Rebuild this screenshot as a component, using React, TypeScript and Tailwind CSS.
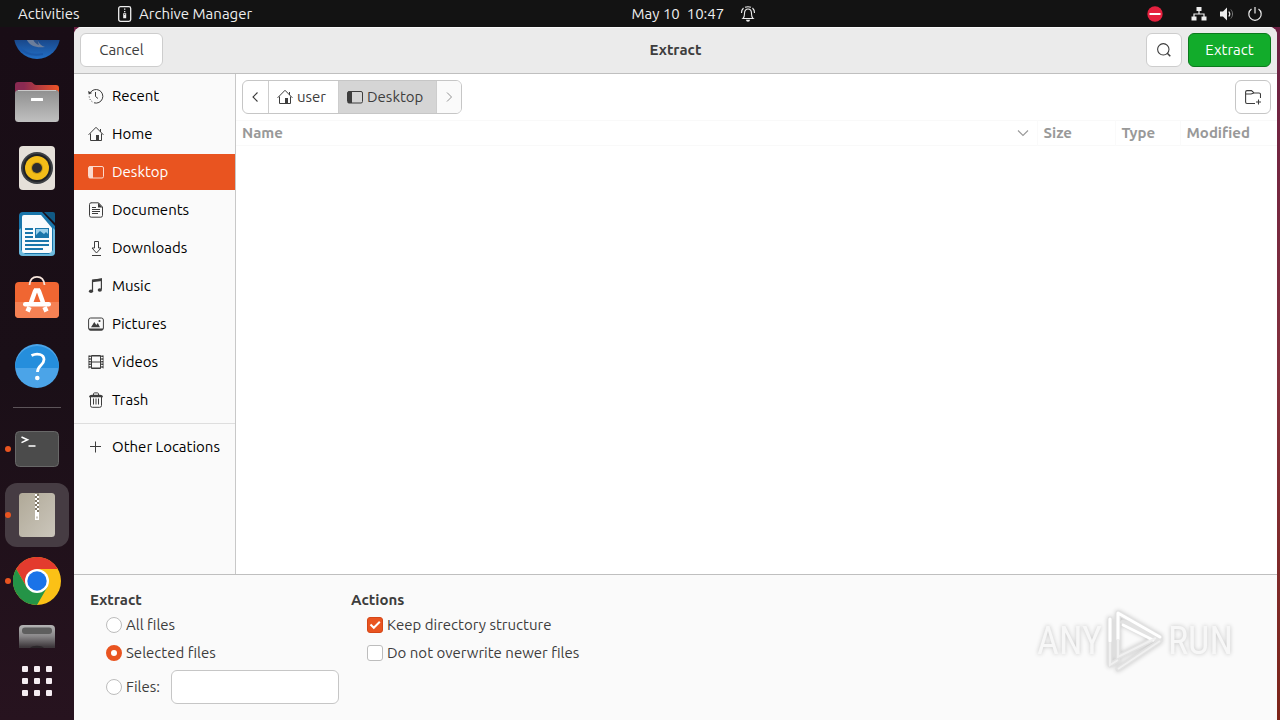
import { useState } from 'react';
import type { ReactNode } from 'react';

const line = { fill: 'none', stroke: 'currentColor', strokeWidth: 1 } as const;

function Icon({ children }: { children: ReactNode }) {
  return (
    <svg viewBox="0 0 16 16" className="h-4 w-4 shrink-0" aria-hidden="true">
      {children}
    </svg>
  );
}

const RecentIcon = () => (
  <Icon>
    <path {...line} d="M2.2 4.8A6.8 6.8 0 1 1 6 14.800M7.500 4v4.500l2.500 2" />
    <path fill="currentColor" d="M0 3l.8 3.600L4.200 5z" />
    <path {...line} strokeDasharray="1 1.600" d="M1.200 8.500a7 7 0 0 0 4.500 6" />
  </Icon>
);

const HomeIcon = () => (
  <Icon>
    <path {...line} d="M.6 8.800 8 1.300l7.400 7.500M12.500 3v3M2.500 7.500v7h11v-7" />
    <path fill="currentColor" d="M8 9h3v6H8z" />
  </Icon>
);

const DesktopIcon = () => (
  <Icon>
    <rect {...line} x=".5" y="2.500" width="15" height="11.500" rx="1.500" />
    <path fill="currentColor" d="M1 2.500h3v11.500H1z" />
    <path {...line} d="M4.500 3v11" />
  </Icon>
);

const DocumentIcon = () => (
  <Icon>
    <path {...line} d="M3 .8h7.500L14.500 5v8.500a1.700 1.700 0 0 1-1.700 1.700H3.200a1.700 1.700 0 0 1-1.700-1.700V2.500A1.700 1.700 0 0 1 3.200.8z" />
    <path fill="currentColor" d="M10 .8 14.500 5.500H10z" />
    <path {...line} d="M4 5.500h4M4 7.500h8M4 9.500h8M4 11.500h6" />
  </Icon>
);

const DownloadIcon = () => (
  <Icon>
    <path {...line} d="M6.500 1.500h4V8h2.500l-4.500 5L4 8h2.500zM4 15.500h9" />
  </Icon>
);

const MusicIcon = () => (
  <Icon>
    <path {...line} strokeWidth="1.200" d="M4.500 13V2.200L13.400 1v10.500" />
    <path fill="currentColor" d="M4 1.800 14 .5V3L4 4.200z" />
    <ellipse cx="3" cy="13.200" rx="2.100" ry="1.800" fill="currentColor" />
    <ellipse cx="11.800" cy="12" rx="2.100" ry="1.800" fill="currentColor" />
  </Icon>
);

const PictureIcon = () => (
  <Icon>
    <rect {...line} x=".6" y="2" width="14.800" height="12" rx="2" />
    <path fill="currentColor" d="M.6 12.500h14.800c0 1.500-.8 2-2 2H2.600c-1.200 0-2-.5-2-2zM3 11.300 6.300 6 8.300 9l1.500-2 2.200 4.300z" />
    <circle cx="11.500" cy="5" r="1.100" fill="currentColor" />
  </Icon>
);

const VideoIcon = () => (
  <Icon>
    <path {...line} d="M3.500 1.500h9v13h-9zM3.500 8h9M3.500 2h9M3.500 14h9" />
    <path {...line} strokeWidth="2" strokeDasharray="1.500 1.200" d="M1.800 1.500v13.400M14.200 1.500v13.400" />
    <path {...line} strokeWidth=".7" d="M.8 1.500v13M15.200 1.500v13" />
  </Icon>
);

const TrashIcon = () => (
  <Icon>
    <path {...line} d="M2.500 5v8.500a1.800 1.800 0 0 0 1.800 1.800h7.400a1.800 1.800 0 0 0 1.800-1.800V5M5.500 6.500v6M8 6.500v6M10.500 6.500v6" />
    <path fill="currentColor" d="M1 5.200C1.200 3.500 2.400 2.800 4 2.800h8c1.600 0 2.800.7 3 2.400z" />
    <path {...line} d="M5.500 3V1.800C5.500 1.200 6 .9 6.500.9h3c.5 0 1 .3 1 .9V3" />
  </Icon>
);

const PlusIcon = () => (
  <Icon>
    <path {...line} d="M7.500 2.500v11M2 7.500h11" />
  </Icon>
);

const places = [
  { name: 'Recent', icon: RecentIcon },
  { name: 'Home', icon: HomeIcon },
  { name: 'Desktop', icon: DesktopIcon },
  { name: 'Documents', icon: DocumentIcon },
  { name: 'Downloads', icon: DownloadIcon },
  { name: 'Music', icon: MusicIcon },
  { name: 'Pictures', icon: PictureIcon },
  { name: 'Videos', icon: VideoIcon },
  { name: 'Trash', icon: TrashIcon },
];

function TopBar() {
  return (
    <header className="flex h-[27px] shrink-0 items-center bg-[#131313] pr-[17px] text-[#eeeeee]">
      <div className="flex w-1/2 shrink-0 items-center pl-[18px]">
        <button className="w-[99px] text-left">Activities</button>
        <button className="flex items-center gap-1.5">
          <Icon>
            <rect x="1.700" y=".7" width="12" height="14.600" rx="1.800" fill="none" stroke="currentColor" strokeWidth="1.300" />
            <path stroke="currentColor" strokeWidth="1.300" strokeDasharray="1.300 1.200" d="M7.700 2.500v4.500" />
            <path fill="currentColor" fillRule="evenodd" d="M6.200 7.200h3v5h-3zM7.200 8.200v.8h1v-.8z" />
          </Icon>
          Archive Manager
        </button>
      </div>
      <button className="flex items-center gap-4 whitespace-pre">
        May 10{'  '}10:47
        <Icon>
          <path fill="none" stroke="currentColor" strokeWidth="1.100" d="M3 12.500c1.500-1.200 1.500-3 1.500-5C4.500 4.700 6 3 8 3s3.500 1.700 3.500 4.500c0 2 0 3.800 1.500 5zM1.500 7c0-2 .6-3.800 2-5M14.500 7c0-2-.6-3.800-2-5M5 1.300C7 .5 9 .5 11 1.300" />
          <path fill="currentColor" d="M6 13.800h4a2 2 0 0 1-4 0z" />
        </Icon>
      </button>
      <div className="ml-auto flex items-center gap-3">
        <Icon>
          <circle cx="8" cy="8" r="7.700" fill="#e5213f" />
          <path fill="#fff" d="M2.500 7h11v2h-11z" />
        </Icon>
        <button className="ml-4 flex items-center gap-3" aria-label="System menu">
          <Icon>
            <path fill="currentColor" d="M5.500 1h5v4h-5zM.5 10.500h5v4h-5zM10.500 10.500h5v4h-5z" />
            <path {...line} strokeWidth="1.200" d="M8 5v3M3 11V8h10v3" />
          </Icon>
          <Icon>
            <path fill="currentColor" d="M1 5.500h3L8 1.500v13l-4-4H1z" />
            <path {...line} strokeWidth="1.200" d="M9.800 5.500c1.200 1.500 1.200 3.500 0 5" />
            <path {...line} stroke="#777" d="M11.800 3.500c2.300 2.600 2.300 6.400 0 9" />
          </Icon>
          <Icon>
            <path {...line} strokeWidth="1.200" d="M4.500 3a6.200 6.200 0 1 0 7 0M8 1v6.500" />
          </Icon>
        </button>
      </div>
    </header>
  );
}

function DockItem({ label, running, active, children }: { label: string; running?: boolean; active?: boolean; children: ReactNode }) {
  return (
    <button aria-label={label} className="relative flex h-[66px] w-full shrink-0 items-center justify-center">
      {running && <span className="absolute left-[5px] z-10 h-1.5 w-1.5 rounded-full bg-[#e95420]" />}
      <span className={`flex h-16 w-16 items-center justify-center rounded-xl ${active ? 'bg-[#463c43]' : ''}`}>
        <svg viewBox="0 0 48 48" className="h-12 w-12">
          {children}
        </svg>
      </span>
    </button>
  );
}

function Dock() {
  return (
    <nav className="flex w-[74px] shrink-0 flex-col bg-linear-to-b from-[#190d16] via-[#1a0f17] to-[#27131f] pt-[13px]">
      <svg className="h-0 w-0" aria-hidden="true">
        <defs>
          <linearGradient id="bird" x1="0" y1="0" x2="0" y2="1">
            <stop offset=".5" stopColor="#173f7d" />
            <stop offset="1" stopColor="#2270c8" />
          </linearGradient>
          <linearGradient id="folder" x1="0" y1="0" x2="0" y2="1">
            <stop offset="0" stopColor="#8f8f8f" />
            <stop offset="1" stopColor="#c0c0c0" />
          </linearGradient>
          <linearGradient id="tab" x1="0" y1="0" x2="1" y2="0">
            <stop offset=".2" stopColor="#8a2a52" />
            <stop offset="1" stopColor="#ee5426" />
          </linearGradient>
          <linearGradient id="zip" x1="0" y1="0" x2="1" y2="1">
            <stop offset="0" stopColor="#b0a998" />
            <stop offset="1" stopColor="#cbc6bb" />
          </linearGradient>
          <linearGradient id="drive" x1="0" y1="0" x2="0" y2="1">
            <stop offset="0" stopColor="#b4b4b4" />
            <stop offset=".25" stopColor="#8a888a" />
            <stop offset=".5" stopColor="#3d373b" />
          </linearGradient>
        </defs>
      </svg>
      <div className="flex min-h-0 flex-1 flex-col overflow-hidden">
        <div className="flex h-[29px] shrink-0 items-end overflow-hidden">
          <DockItem label="Thunderbird">
            <circle cx="24" cy="24" r="23" fill="url(#bird)" />
            <path fill="#6a7d9b" d="M13 26c3 8 9 10 19 9-4-1-7-4-8-9z" />
            <path fill="#2a4f86" d="M20 27c1 3 3 5 6 6-1-2-1-4-1-6z" />
            <path fill="none" stroke="#1b58a8" strokeWidth="2" d="M6 35c6 7 14 9 24 7" />
          </DockItem>
        </div>
        <DockItem label="Files">
          <path fill="url(#tab)" d="M5 4h13c2 0 2.500 3 5 3h20a3 3 0 0 1 3 3v10H2V7a3 3 0 0 1 3-3z" />
          <rect x="2" y="12" width="44" height="32" rx="3.500" fill="url(#folder)" />
          <path stroke="#c9c9c9" d="M5 12.500h38" />
          <rect x="18" y="20" width="12" height="3" rx=".5" fill="#fff" />
        </DockItem>
        <DockItem label="Rhythmbox">
          <rect x="6" y="2" width="36" height="44" rx="4" fill="#e5e0d9" />
          <circle cx="24" cy="24" r="16" fill="#3d4044" />
          <circle cx="24" cy="24" r="14" fill="#202226" />
          <circle cx="24" cy="24" r="12" fill="#f3bd18" />
          <circle cx="24" cy="24" r="6" fill="#c99a12" />
          <circle cx="24" cy="24" r="5" fill="#2b2c30" />
        </DockItem>
        <DockItem label="LibreOffice Writer">
          <path fill="#1976ab" d="M10 2h19l13 14v26a4 4 0 0 1-4 4H10a4 4 0 0 1-4-4V6a4 4 0 0 1 4-4z" />
          <path fill="#6db9dc" d="M8 40V18L6 20v22a4 4 0 0 0 4 4h28a4 4 0 0 0 4-4V20l-2-2v22l-4 4H12z" />
          <path fill="#f8fbfd" d="M11 5h17l11 13v22a3 3 0 0 1-3 3H11a2 2 0 0 1-2-2V7a2 2 0 0 1 2-2z" />
          <path fill="#115a85" d="M31 2h9a2 2 0 0 1 2 2v9z" />
          <path stroke="#1976ab" strokeWidth="2" d="M12 19h8M12 23h8M12 27h8M12 31h24M12 35h24M12 39h18" />
          <rect x="22.500" y="18.500" width="13" height="9" fill="#9bd0ea" stroke="#1976ab" />
          <path fill="#1976ab" d="M23 27v-2l4-4 4 3 2-2 2 2v3z" />
        </DockItem>
        <DockItem label="Ubuntu Software">
          <rect x="2" y="6" width="44" height="36" rx="4" fill="#f06632" />
          <path fill="#f58154" d="M2 26h44v12a4 4 0 0 1-4 4H6a4 4 0 0 1-4-4z" />
          <path fill="none" stroke="#f7e5dc" strokeWidth="1.800" d="M16.500 9C17 3 19.500.9 24 .9S31 3 31.500 9" />
          <path fill="none" stroke="#fff" strokeWidth="4.500" strokeLinejoin="round" d="M21 14.500h6M22.500 14 18 26.500M25.500 14 30 26.500M16.500 31l-2 4.500M31.500 31l2 4.500" />
          <rect x="10" y="26" width="28" height="4.500" rx="2.200" fill="#fff" />
        </DockItem>
        <DockItem label="Help">
          <circle cx="24" cy="24" r="22" fill="#4ba4e8" />
          <path fill="#258edc" d="M2 26a22 22 0 1 1 44 0z" />
          <path fill="none" stroke="#fff" strokeWidth="2.800" d="M18.500 13.500c6-3 12.500-1 12.500 4 0 6-6.500 5.500-6.500 12.500" />
          <circle cx="24.300" cy="36" r="2.300" fill="#fff" />
        </DockItem>
        <div className="flex h-[17px] shrink-0 items-center px-[13px]">
          <hr className="w-full border-[#5c5459]" />
        </div>
        <DockItem label="Terminal" running>
          <rect x="2.500" y="6.500" width="43" height="35" rx="4" fill="#4b4b4b" stroke="#686868" />
          <path fill="none" stroke="#fff" strokeWidth="1.600" d="m8.500 12 6 2.800-6 2.800M15.500 21h7" />
        </DockItem>
        <DockItem label="Archive Manager" running active>
          <rect x="6" y="2" width="36" height="44" rx="3.500" fill="url(#zip)" />
          <path stroke="#817968" strokeWidth="4" d="M24 2.500v19" />
          <path stroke="#fff" strokeWidth="2" strokeDasharray="2 2" d="M23 3v18M25 5v16" />
          <path fill="#fff" fillRule="evenodd" d="M22 21h4v8h-4zM23.200 25.500v2h1.600v-2z" />
        </DockItem>
        <DockItem label="Google Chrome" running>
          <circle cx="24" cy="24" r="24" fill="#fbc116" />
          <path fill="#e33b2e" d="M24 24 3.200 12A24 24 0 0 1 44.800 12H24z" />
          <path fill="#e33b2e" d="M3.200 12 13.600 30 24 24V12z" />
          <path fill="#249447" d="M24 48 34.400 30 13.600 30 3.200 12A24 24 0 0 0 24 48z" />
          <circle cx="24" cy="24" r="12" fill="#fff" />
          <circle cx="24" cy="24" r="9.700" fill="#1a73e8" />
        </DockItem>
        <DockItem label="Drive">
          <rect x="6" y="2" width="36" height="44" rx="4" fill="url(#drive)" />
          <rect x="9" y="4.500" width="30" height="6.500" rx="3" fill="#5e5e5e" />
          <path fill="#2b262a" d="M17 25c2-3 12-3 14 0z" />
        </DockItem>
      </div>
      <button className="flex h-[72px] shrink-0 items-start justify-center pt-[18px]" aria-label="Show Applications">
        <span className="grid grid-cols-3 gap-1.5">
          {Array.from({ length: 9 }, (_, i) => (
            <span key={i} className="h-1.5 w-1.5 rounded-[1px] bg-[#f5edf2]" />
          ))}
        </span>
      </button>
    </nav>
  );
}

function PathBar() {
  return (
    <div className="flex items-center justify-between px-1.5 pt-1.5">
      <div className="flex h-[34px] overflow-hidden rounded-md border border-[#c6c6c6] bg-white">
        <button className="flex w-[26px] items-center justify-center border-r border-[#cdcdcd]" aria-label="Back">
          <Icon>
            <path {...line} strokeWidth="1.100" d="M9.500 3.500 5 8l4.500 4.500" />
          </Icon>
        </button>
        <button className="flex w-[70px] items-center gap-1 border-r border-[#cdcdcd] pl-2">
          <HomeIcon />
          user
        </button>
        <button className="flex w-[97px] items-center gap-1 bg-[#d5d5d5] pl-2">
          <DesktopIcon />
          Desktop
        </button>
        <button disabled className="flex w-[25px] items-center justify-center border-l border-[#cdcdcd] bg-[#fafafa] text-[#929292]" aria-label="Forward">
          <Icon>
            <path {...line} d="M6 3.500 10.500 8 6 12.500" />
          </Icon>
        </button>
      </div>
      <button className="flex h-[34px] w-9 items-center justify-center rounded-md border border-[#c6c6c6] bg-white" aria-label="Create Folder">
        <Icon>
          <path {...line} strokeWidth="1.100" d="M10 14.500H2A1.500 1.500 0 0 1 .6 13V3A1.500 1.500 0 0 1 2 1.600h4.500L9 4h5a1.500 1.500 0 0 1 1.500 1.500V9M.6 5H6l3-1M13.500 10.500v5M11 13h5" />
        </Icon>
      </button>
    </div>
  );
}

const radioClass =
  'h-4 w-4 shrink-0 appearance-none rounded-full border border-[#bdbdbd] bg-white checked:border-[5px] checked:border-[#e95420]';

function CheckOption({ label, defaultChecked }: { label: string; defaultChecked?: boolean }) {
  return (
    <label className="flex h-7 items-center gap-1">
      <span className="grid">
        <input
          type="checkbox"
          defaultChecked={defaultChecked}
          className="peer col-start-1 row-start-1 h-4 w-4 appearance-none rounded-[3px] border border-[#bdbdbd] bg-white checked:border-[#d54717] checked:bg-[#e95420]"
        />
        <svg viewBox="0 0 16 16" className="pointer-events-none col-start-1 row-start-1 hidden h-4 w-4 peer-checked:block">
          <path fill="none" stroke="#fff" strokeWidth="2" d="m3.500 7.500 3.300 3.300 6-6" />
        </svg>
      </span>
      {label}
    </label>
  );
}

function Watermark() {
  return (
    <div className="pointer-events-none absolute right-11 bottom-11 flex items-center gap-1 font-['Roboto_Condensed','Liberation_Sans_Narrow','Liberation_Sans',sans-serif] text-[38px] leading-[70px] text-[#f7f7f7] drop-shadow-[0_0_2px_#c4c4c4]">
      ANY
      <svg viewBox="0 0 58 64" className="h-16 w-[58px]">
        <g fill="none" stroke="#e2e2e2" strokeWidth="5" strokeLinejoin="round" strokeLinecap="round">
          <path d="M4 10v46l8-5M12 30V4l42 24M12 30v18l38-19-33-16M12 60l42-28" />
        </g>
        <g fill="none" stroke="#fff" strokeWidth="3" strokeLinejoin="round" strokeLinecap="round">
          <path d="M4 10v22M12 30V4l42 24M17 16l30 15" />
        </g>
        <path fill="none" stroke="#f0f0f0" strokeWidth="2" d="M4 34v22l8-5M12 30v18l38-19M12 60l42-28" />
      </svg>
      RUN
    </div>
  );
}

export default function App() {
  const [place, setPlace] = useState('Desktop');
  const [mode, setMode] = useState('selected');

  return (
    <div className="flex h-screen flex-col overflow-hidden bg-[#131313] font-['Ubuntu','Noto_Sans',sans-serif] text-[15px] leading-[18px] text-[#3d3d3d]">
      <TopBar />
      <div className="flex min-h-0 flex-1 bg-linear-to-b from-[#190d16] to-[#27131f]">
        <Dock />
        <div className="flex min-w-0 flex-1 bg-linear-to-b from-[#6b1f42] via-[#84303c] to-[#7c2418] pr-[3px]">
          <main className="relative flex min-w-0 flex-1 flex-col overflow-hidden rounded-t-lg bg-[#fafafa]">
            <header className="grid h-[47px] shrink-0 grid-cols-[1fr_auto_1fr] items-center border-b border-[#bfbfbf] bg-[#ebebeb] px-1.5 shadow-[inset_0_1px_#f8f8f8]">
              <button className="h-[34px] w-[83px] rounded-md border border-[#cdcdcd] bg-white">Cancel</button>
              <h1 className="font-bold">Extract</h1>
              <div className="flex justify-end gap-1.5">
                <button className="flex h-[34px] w-9 items-center justify-center rounded-md border border-[#cdcdcd] bg-white" aria-label="Search">
                  <Icon>
                    <circle {...line} strokeWidth="1.100" cx="7.300" cy="7.300" r="5.700" />
                    <path {...line} strokeWidth="1.500" d="m11.300 11.300 3 3" />
                  </Icon>
                </button>
                <button className="h-[34px] w-[83px] rounded-md border border-[#0b7a1d] bg-[#12ac2b] text-white">Extract</button>
              </div>
            </header>

            <div className="flex min-h-0 flex-1">
              <aside className="flex w-[162px] shrink-0 flex-col border-r border-[#c8c8c8] pt-1">
                <ul className="flex flex-col gap-0.5 border-b border-[#dedede] pb-[5px]">
                  {places.map(({ name, icon: PlaceIcon }) => (
                    <li key={name}>
                      <button
                        onClick={() => setPlace(name)}
                        className={`flex h-9 w-full items-center gap-2 pl-3.5 ${place === name ? 'bg-[#e95420] text-[#fbd9cd]' : 'text-[#3d3d3d]'}`}
                      >
                        <PlaceIcon />
                        <span className={place === name ? 'text-white' : 'text-black'}>{name}</span>
                      </button>
                    </li>
                  ))}
                </ul>
                <button className="mt-[5px] flex h-9 items-center gap-2 pl-3.5 whitespace-nowrap">
                  <PlusIcon />
                  <span className="text-black">Other Locations</span>
                </button>
              </aside>

              <section className="min-w-0 flex-1 bg-white">
                <PathBar />
                <table className="mt-1.5 w-full table-fixed border-y border-[#f9f9f9] text-left text-[#999999]">
                  <thead>
                    <tr className="h-[25px]">
                      <th className="border-r border-[#fafafa] pr-1.5 pl-1.5">
                        <div className="flex items-center justify-between">
                          Name
                          <Icon>
                            <path {...line} strokeWidth="1.100" d="m3 5.500 5 5 5-5" />
                          </Icon>
                        </div>
                      </th>
                      <th className="w-[78px] border-r border-[#fafafa] pl-1.5">Size</th>
                      <th className="w-[65px] border-r border-[#fafafa] pl-1.5">Type</th>
                      <th className="w-[97px] pl-1.5">Modified</th>
                    </tr>
                  </thead>
                </table>
              </section>
            </div>

            <footer className="flex shrink-0 gap-3 border-t border-[#bfbfbf] p-4">
              <fieldset>
                <legend className="font-bold">Extract</legend>
                <div className="mt-0.5 pl-4">
                  <label className="flex h-7 items-center gap-1">
                    <input type="radio" name="mode" className={radioClass} checked={mode === 'all'} onChange={() => setMode('all')} />
                    All files
                  </label>
                  <label className="flex h-7 items-center gap-1">
                    <input type="radio" name="mode" className={radioClass} checked={mode === 'selected'} onChange={() => setMode('selected')} />
                    Selected files
                  </label>
                  <div className="mt-[3px] flex items-center">
                    <label className="flex w-[65px] items-center gap-1">
                      <input type="radio" name="mode" className={radioClass} checked={mode === 'files'} onChange={() => setMode('files')} />
                      Files:
                    </label>
                    <input type="text" aria-label="Files" className="h-[34px] w-[168px] rounded-md border border-[#c6c6c6] bg-white px-2" />
                  </div>
                </div>
              </fieldset>
              <fieldset>
                <legend className="font-bold">Actions</legend>
                <div className="mt-0.5 pl-4">
                  <CheckOption label="Keep directory structure" defaultChecked />
                  <CheckOption label="Do not overwrite newer files" />
                </div>
              </fieldset>
            </footer>
            <Watermark />
          </main>
        </div>
      </div>
    </div>
  );
}
